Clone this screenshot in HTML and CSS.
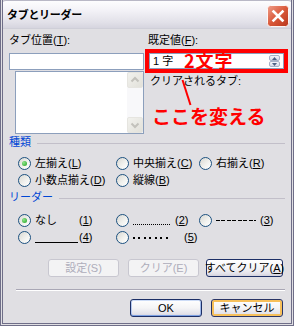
FILE: index.html
```
<!DOCTYPE html>
<html lang="ja">
<head>
<meta charset="utf-8">
<title>タブとリーダー</title>
<link rel="stylesheet" href="styles.css">
</head>
<body>
<div class="dialog">
  <div class="titlebar">
    <span class="title">タブとリーダー</span>
    <span class="close">
      <svg width="22" height="22" viewBox="0 0 22 22">
        <defs>
          <linearGradient id="cg" x1="0" y1="0" x2="1" y2="1">
            <stop offset="0" stop-color="#f0a08c"/>
            <stop offset="0.5" stop-color="#d9583a"/>
            <stop offset="1" stop-color="#b8361d"/>
          </linearGradient>
        </defs>
        <rect x="0.5" y="0.5" width="21" height="21" rx="3" fill="url(#cg)" stroke="#ffffff" stroke-opacity="0.9"/>
        <path d="M6.5 6.5 L15.5 15.5 M15.5 6.5 L6.5 15.5" stroke="#ffffff" stroke-width="2.6" stroke-linecap="square"/>
      </svg>
    </span>
  </div>
  <div class="body">
    <div class="top">
      <div class="col-left">
        <div class="label">タブ位置(<u>T</u>):</div>
        <div class="input"></div>
        <div class="listbox">
          <div class="list-area"></div>
          <div class="vscroll">
            <div class="sbtn">
              <svg width="14" height="14" viewBox="0 0 14 14"><path d="M3.5 8.5 L7 5 L10.5 8.5" fill="none" stroke="#c3c2bc" stroke-width="2"/></svg>
            </div>
            <div class="track"></div>
            <div class="sbtn">
              <svg width="14" height="14" viewBox="0 0 14 14"><path d="M3.5 5.5 L7 9 L10.5 5.5" fill="none" stroke="#c3c2bc" stroke-width="2"/></svg>
            </div>
          </div>
        </div>
      </div>
      <div class="col-right">
        <div class="label">既定値(<u>F</u>):</div>
        <div class="spin">
          <span class="spin-val">1 字</span>
          <span class="spin-btns">
            <span class="sb"><svg width="7" height="4" viewBox="0 0 7 4"><path d="M0 4 L3.5 0 L7 4 Z" fill="#4d6185"/></svg></span>
            <span class="sb"><svg width="7" height="4" viewBox="0 0 7 4"><path d="M0 0 L3.5 4 L7 0 Z" fill="#4d6185"/></svg></span>
          </span>
        </div>
        <div class="label cleared">クリアされるタブ:</div>
      </div>
    </div>

    <div class="group-head type-head"><span class="gtitle">種類</span><span class="gline"></span></div>
    <div class="options type-opts">
      <div class="opt"><span class="radio on"></span><span>左揃え(<u>L</u>)</span></div>
      <div class="opt"><span class="radio"></span><span>中央揃え(<u>C</u>)</span></div>
      <div class="opt"><span class="radio"></span><span>右揃え(<u>R</u>)</span></div>
      <div class="opt"><span class="radio"></span><span>小数点揃え(<u>D</u>)</span></div>
      <div class="opt"><span class="radio"></span><span>縦線(<u>B</u>)</span></div>
    </div>

    <div class="group-head leader-head"><span class="gtitle">リーダー</span><span class="gline"></span></div>
    <div class="options leader-opts">
      <div class="opt"><span class="radio on"></span><span class="lname">なし</span><span>(<u>1</u>)</span></div>
      <div class="opt"><span class="radio"></span><span class="ldots"></span><span>(<u>2</u>)</span></div>
      <div class="opt"><span class="radio"></span><span class="ldash"></span><span>(<u>3</u>)</span></div>
      <div class="opt"><span class="radio"></span><span class="lunder"></span><span>(<u>4</u>)</span></div>
      <div class="opt"><span class="radio"></span><span class="lbullets"></span><span>(<u>5</u>)</span></div>
    </div>

    <div class="btnrow tabs-btns">
      <span class="btn dis w71">設定(S)</span>
      <span class="btn dis w71 g7">クリア(E)</span>
      <span class="btn w77">すべてクリア(<u>A</u>)</span>
    </div>
    <div class="sep"></div>
    <div class="btnrow final-btns">
      <span class="btn ok w72">OK</span>
      <span class="btn cancel w72">キャンセル</span>
    </div>
  </div>

  <div class="redbox"></div>
  <div class="note2">2文字</div>
  <svg class="pointer" width="294" height="326" viewBox="0 0 294 326"><path d="M182.5 80 L190.5 105" stroke="#ff0000" stroke-width="2"/></svg>
  <div class="note">ここを変える</div>
</div>
</body>
</html>
```
FILE: styles.css
```
html, body {
  margin: 0;
  padding: 0;
  background: #e0dfe3;
}
body {
  font-family: "Liberation Sans", "Noto Sans CJK JP", sans-serif;
  font-size: 11px;
  color: #000;
}
u { text-decoration: underline; text-underline-offset: 1px; }

.dialog {
  position: relative;
  width: 294px;
  height: 326px;
  box-sizing: border-box;
  background: #e0dfe3;
  border: 3px double #6f6e88;
  border-top: 0;
  display: flex;
  flex-direction: column;
  overflow: hidden;
}

.titlebar {
  height: 29px;
  flex: none;
  display: flex;
  align-items: center;
  justify-content: space-between;
  background: linear-gradient(#fdfdfe 0%, #f3f2f7 35%, #e1e0e8 80%, #d6d5df 100%);
  border-bottom: 1px solid #cfcfd8;
  box-sizing: border-box;
  margin: 0 -3px;
  padding-left: 7px;
  padding-right: 5px;
  border-radius: 6px 6px 0 0;
  border-top: 1px solid #b9b8c6;
}
.title {
  font-weight: bold;
  font-size: 11px;
  line-height: 14px;
  letter-spacing: -0.3px;
}
.close {
  width: 22px;
  height: 22px;
  display: block;
  margin-top: 3px;
}
.close svg { display: block; }

.body {
  flex: 1;
  padding: 0 6px 0 6px;
  display: flex;
  flex-direction: column;
}

.top {
  display: grid;
  grid-template-columns: 135px 1fr;
  column-gap: 4px;
  padding-top: 5px;
}
.label {
  line-height: 13px;
  height: 13px;
  white-space: nowrap;
}
.input {
  margin-top: 6px;
  height: 17px;
  box-sizing: border-box;
  border: 1px solid #8c9fbc;
  background: #fff;
}
.listbox {
  margin: 1px 0 0 6px;
  height: 63px;
  box-sizing: border-box;
  border: 1px solid #8c9fbc;
  background: #fff;
  display: flex;
}
.list-area { flex: 1; }
.vscroll {
  width: 16px;
  display: flex;
  flex-direction: column;
  background: #f8f8fa;
}
.sbtn {
  height: 16px;
  box-sizing: border-box;
  border: 1px solid #e6e5e0;
  border-radius: 2px;
  background: linear-gradient(135deg, #f2f2ee, #e2e1da);
  display: flex;
  align-items: center;
  justify-content: center;
}
.sbtn svg { display: block; }
.track { flex: 1; }

.spin {
  margin: 6px 0 0 1px;
  width: 135px;
  height: 16px;
  box-sizing: border-box;
  border: 1px solid #8c9fbc;
  background: #fff;
  display: flex;
  align-items: center;
  justify-content: space-between;
  padding: 0 3px 0 3px;
}
.spin-val { line-height: 13px; }
.spin-btns {
  display: flex;
  flex-direction: column;
}
.sb {
  width: 11px;
  height: 6px;
  box-sizing: border-box;
  border: 1px solid #a7b1c8;
  border-radius: 2px;
  background: linear-gradient(#f4f5fb, #d4d9e8);
  display: flex;
  align-items: center;
  justify-content: center;
}
.sb svg { display: block; width: 5px; height: 3px; }
.cleared {
  margin-top: 6px;
  margin-left: 2px;
}

.group-head {
  display: flex;
  align-items: center;
  height: 13px;
  line-height: 13px;
}
.type-head { margin-top: 2px; }
.leader-head { margin-top: 2px; }
.gtitle {
  color: #0046d5;
  white-space: nowrap;
}
.gline {
  flex: 1;
  height: 1px;
  background: #c2bfc9;
  margin: 2px 0 0 6px;
}

.options {
  display: grid;
  grid-template-columns: 98px 83px 1fr;
  grid-auto-rows: 17px;
  padding-left: 9px;
}
.type-opts { margin-top: 6px; }
.leader-opts { margin-top: 8px; }
.opt {
  display: flex;
  align-items: center;
  gap: 4px;
  white-space: nowrap;
  line-height: 13px;
}
.radio {
  width: 13px;
  height: 13px;
  flex: none;
  box-sizing: border-box;
  border: 1px solid #1c5180;
  border-radius: 50%;
  background: linear-gradient(135deg, #d9d8d2 0%, #f3f3f0 60%, #ffffff 100%);
  display: flex;
  align-items: center;
  justify-content: center;
}
.radio.on::after {
  content: "";
  width: 5px;
  height: 5px;
  border-radius: 50%;
  background: radial-gradient(circle at 35% 35%, #8ee58b, #21a121);
}
.lname { width: 40px; }
.ldots {
  width: 38px;
  height: 1px;
  align-self: flex-end;
  margin-bottom: 4px;
  background: repeating-linear-gradient(to right, #000 0 1px, transparent 1px 2px);
}
.ldash {
  width: 40px;
  height: 1px;
  background: repeating-linear-gradient(to right, #000 0 4px, transparent 4px 5.5px);
}
.lunder {
  width: 43px;
  height: 1px;
  align-self: flex-end;
  margin-bottom: 3px;
  background: #000;
  margin-right: -3px;
}
.lbullets {
  width: 35px;
  height: 2px;
  background: repeating-linear-gradient(to right, #000 0 2px, transparent 2px 5.5px);
  margin-right: 12px;
}

.btnrow {
  display: flex;
  justify-content: flex-end;
  padding-right: 2px;
}
.tabs-btns { margin-top: 13px; }
.final-btns { margin-top: 8px; gap: 9px; }
.btn {
  height: 18px;
  box-sizing: border-box;
  border: 1px solid #1d2f66;
  border-radius: 3px;
  background: linear-gradient(#ffffff 0%, #f4f4f6 50%, #e3e2ea 85%, #d3d2dc 100%);
  display: flex;
  align-items: center;
  justify-content: center;
  line-height: 13px;
  white-space: nowrap;
}
.btn.dis {
  border-color: #c8c7d0;
  background: #f3f3f4;
  color: #aeadbb;
}
.tabs-btns .btn + .btn { margin-left: 9px; }
.tabs-btns .btn.w77 { margin-left: 7px; }
.w71 { width: 71px; }
.w72 { width: 72px; }
.w77 { width: 77px; }
.ok {
  box-shadow: inset 0 1px 0 #cddcf7, inset 0 -1px 0 #7c9fe2, inset 1px 0 0 #b6c9f0, inset -1px 0 0 #9eb8ea;
}
.cancel {
  box-shadow: inset 0 0 0 2px #f7c05a;
  border-color: #2a3566;
}

.sep {
  margin: 12px 0 0 7px;
  height: 1px;
  background: #a9a7b5;
  border-bottom: 1px solid #ffffff;
}

.redbox {
  position: absolute;
  left: 142px;
  top: 49px;
  width: 143px;
  height: 24px;
  box-sizing: border-box;
  border: 4px solid #ff0000;
}
.note2 {
  position: absolute;
  left: 181px;
  top: 48px;
  font-family: "Noto Sans CJK JP", sans-serif;
  font-weight: bold;
  font-size: 18px;
  line-height: 24px;
  color: #ff0000;
  letter-spacing: 1px;
}
.pointer {
  position: absolute;
  left: -3px;
  top: 0;
}
.note {
  position: absolute;
  left: 149px;
  top: 104px;
  font-family: "Noto Sans CJK JP", sans-serif;
  font-weight: bold;
  font-size: 19px;
  line-height: 24px;
  color: #ff0000;
}
```
